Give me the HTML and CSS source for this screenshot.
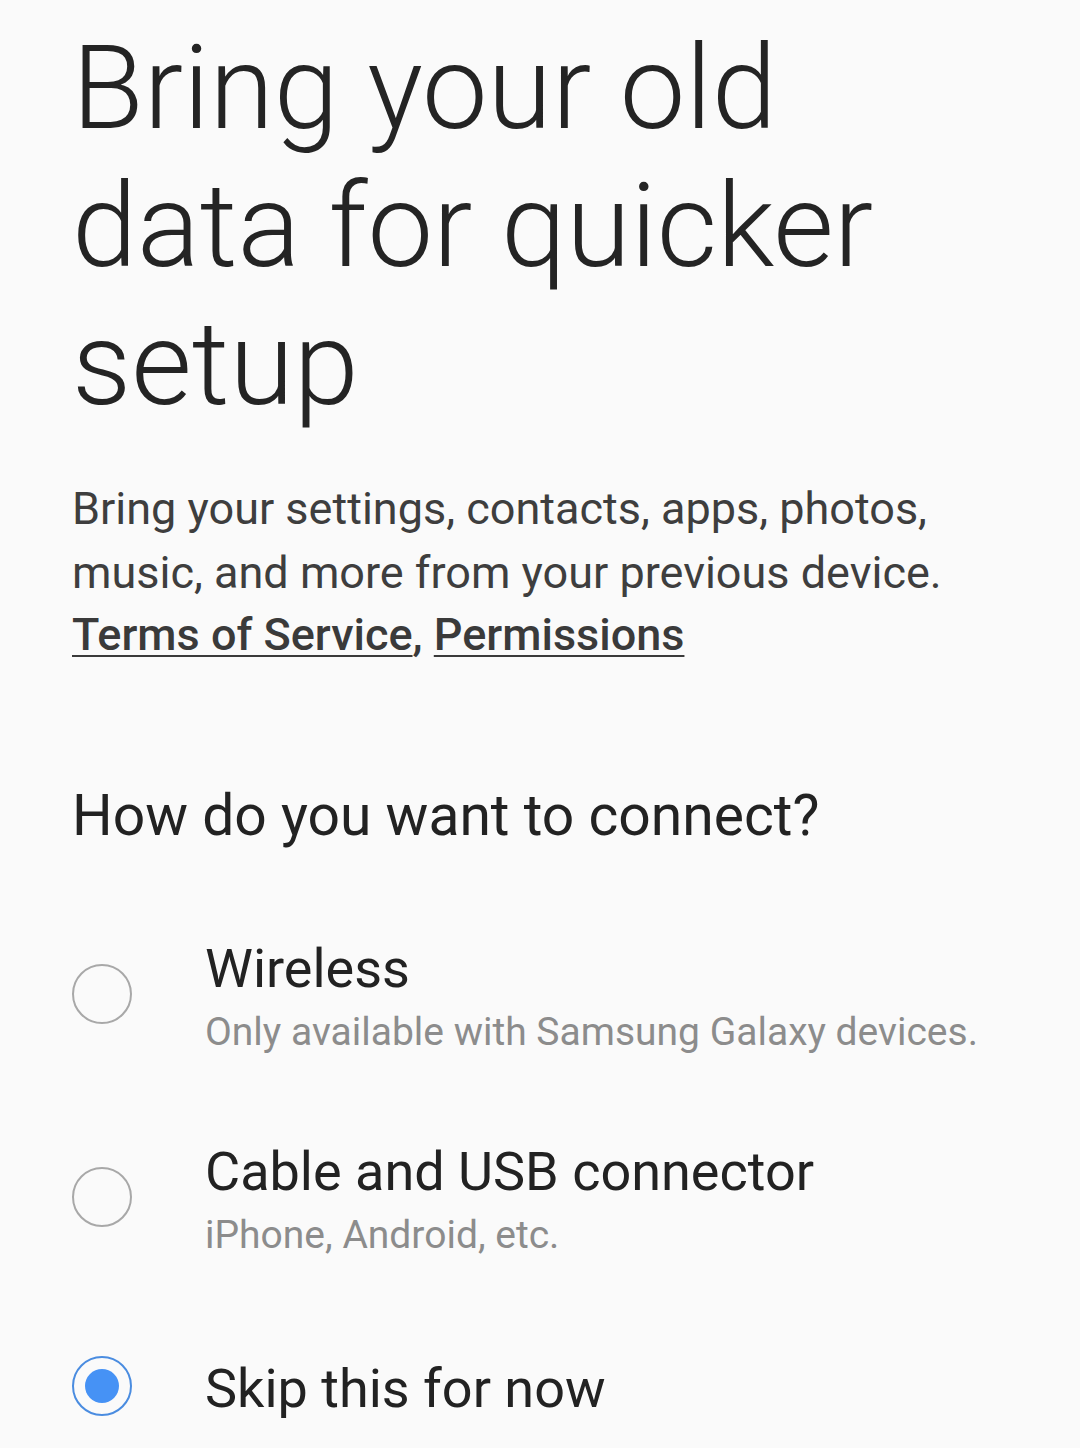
FILE: index.html
```html
<!DOCTYPE html>
<html lang="en">
<head>
<meta charset="utf-8">
<link rel="stylesheet" href="styles.css">
</head>
<body>
<main class="page">
  <h1 class="title">Bring your old data for quicker setup</h1>
  <p class="desc">Bring your settings, contacts, apps, photos, music, and more from your previous device.</p>
  <p class="links"><a class="link">Terms of Service</a>, <a class="link">Permissions</a></p>
  <h2 class="question">How do you want to connect?</h2>
  <ul class="options">
    <li class="option">
      <span class="radio"></span>
      <div class="option-text">
        <div class="option-title">Wireless</div>
        <div class="option-sub">Only available with Samsung Galaxy devices.</div>
      </div>
    </li>
    <li class="option">
      <span class="radio"></span>
      <div class="option-text">
        <div class="option-title">Cable and USB connector</div>
        <div class="option-sub">iPhone, Android, etc.</div>
      </div>
    </li>
    <li class="option option-single">
      <span class="radio radio-on"></span>
      <div class="option-text">
        <div class="option-title">Skip this for now</div>
      </div>
    </li>
  </ul>
</main>
</body>
</html>
```

FILE: styles.css
```css
* { box-sizing: border-box; }
html, body {
  margin: 0;
  padding: 0;
  background: #fafafa;
}
body {
  font-family: Roboto, "Noto Sans", sans-serif;
  color: #222;
  width: 1080px;
  height: 1448px;
  overflow: hidden;
}
.page {
  padding: 19px 72px 0 72px;
}
.title {
  margin: 0;
  font-weight: 300;
  font-size: 117px;
  line-height: 138px;
  color: #242424;
}
.desc {
  margin: 44px 0 0 0;
  font-size: 45px;
  line-height: 64px;
  color: #3e3e3e;
}
.links {
  margin: -2px 0 0 0;
  font-size: 45px;
  line-height: 64px;
  color: #3a3a3a;
  font-weight: 500;
}
.link {
  text-decoration: underline;
  text-decoration-thickness: 2px;
  text-underline-offset: 5px;
}
.question {
  margin: 115px 0 0 0;
  font-weight: 400;
  font-size: 57px;
  line-height: 68px;
  color: #222;
}
.options {
  list-style: none;
  margin: 87px 0 0 0;
  padding: 0;
}
.option {
  display: flex;
  align-items: center;
}
.option + .option {
  margin-top: 84px;
}
.option + .option-single {
  margin-top: 97px;
}
.radio {
  flex: none;
  width: 60px;
  height: 60px;
  border-radius: 50%;
  border: 2px solid #a8a8a8;
  margin-bottom: 6px;
  margin-right: 73px;
  display: flex;
  align-items: center;
  justify-content: center;
}
.radio-on {
  border-color: #4a8ce0;
}
.radio-on::after {
  content: "";
  width: 34px;
  height: 34px;
  border-radius: 50%;
  background: #4692f5;
}
.option-title {
  font-size: 54px;
  line-height: 64px;
  color: #222;
}
.option-sub {
  margin-top: 7px;
  font-size: 39px;
  line-height: 48px;
  color: #8c8c8c;
}
```
